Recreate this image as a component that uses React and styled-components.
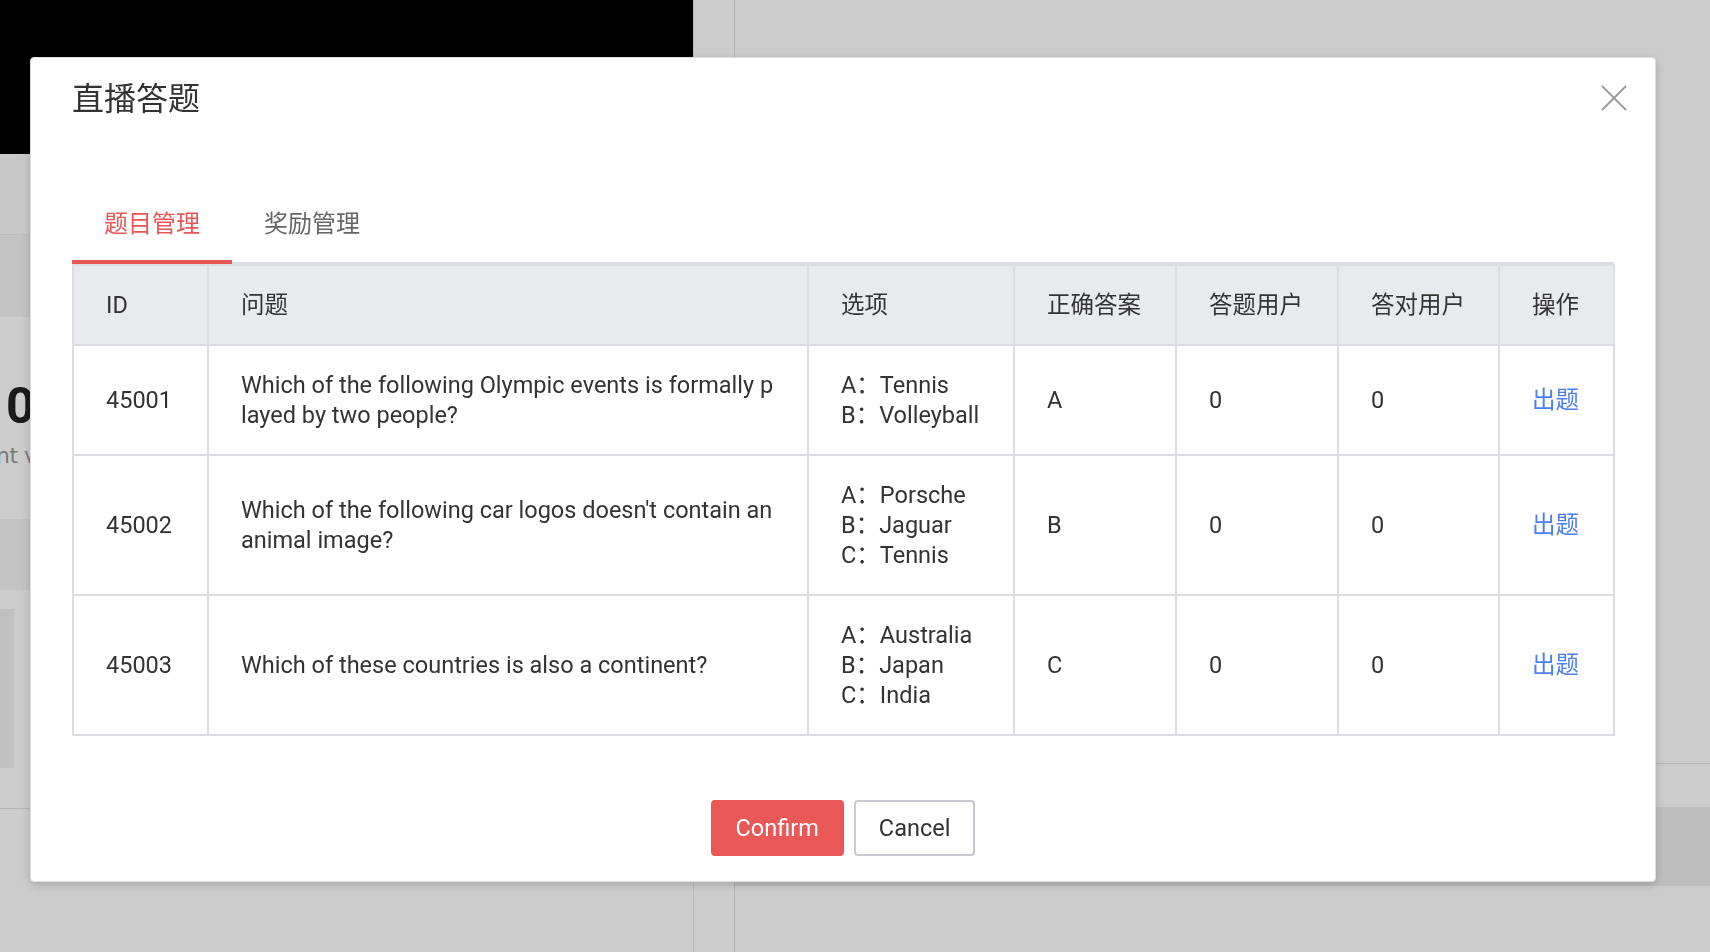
import React, { useState } from 'react';
import styled, { createGlobalStyle } from 'styled-components';

const GlobalStyle = createGlobalStyle`
    html, body {
        margin: 0;
        padding: 0;
        height: 100%;
        overflow: hidden;
    }
    body {
        font-family: Roboto, "Noto Sans CJK SC", sans-serif;
        color: #333;
    }
    * {
        box-sizing: border-box;
    }
`

// titles are kept as the lines the table shows them in
const questions = [
    { id: 45001, title: ['Which of the following Olympic events is formally p', 'layed by two people?'], options: ['Tennis', 'Volleyball'], answer: 'A', answered: 0, correct: 0 },
    { id: 45002, title: ["Which of the following car logos doesn't contain an", 'animal image?'], options: ['Porsche', 'Jaguar', 'Tennis'], answer: 'B', answered: 0, correct: 0 },
    { id: 45003, title: ['Which of these countries is also a continent?'], options: ['Australia', 'Japan', 'India'], answer: 'C', answered: 0, correct: 0 },
]

const columns = [
    { key: 'id', label: 'ID', width: 135 },
    { key: 'title', label: '问题', width: 600 },
    { key: 'options', label: '选项', width: 206 },
    { key: 'answer', label: '正确答案', width: 162 },
    { key: 'answered', label: '答题用户', width: 162 },
    { key: 'correct', label: '答对用户', width: 161 },
    { key: 'action', label: '操作', width: 115 },
]

/* ---------- page behind the dialog ---------- */

const Page = styled.div`
    display: flex;
    width: 100vw;
    height: 100vh;
    background: #fff;
`
const LeftPane = styled.div`
    width: 694px;
    display: flex;
    flex-direction: column;
    border-right: 1px solid #e8e8e8;
`
const Banner = styled.div`
    height: 154px;
    background: #000;
`
const Stripe = styled.div`
    height: ${props => props.h}px;
    background: ${props => props.bg || '#fff'};
    border-bottom: ${props => props.line ? '1px solid #ececec' : 'none'};
`
const Stat = styled.div`
    height: 202px;
    padding-top: 64px;
`
const StatValue = styled.div`
    font-size: 50px;
    font-weight: 700;
    line-height: 50px;
    color: #222;
    padding-left: 6px;
`
const StatLabel = styled.div`
    font-family: "DejaVu Sans", sans-serif;
    font-size: 22px;
    letter-spacing: -0.5px;
    color: #999;
    margin-left: -4px;
    margin-top: 12px;
`
const SmallBox = styled.div`
    height: 159px;
    width: 14px;
    background: #f1f1f1;
    margin-top: 19px;
    border-bottom: 40px solid #fff;
    box-sizing: content-box;
`
const Rule = styled.div`
    border-top: 1px solid #e2e2e2;
`
const Gutter = styled.div`
    width: 41px;
    border-right: 1px solid #e2e2e2;
`
const RightPane = styled.div`
    flex: 1;
    display: flex;
    flex-direction: column;
    padding-top: 763px;
`
const RightBand = styled.div`
    margin-top: 43px;
    height: 79px;
    background: #eeeeee;
`

/* ---------- dialog ---------- */

const Overlay = styled.div`
    position: fixed;
    inset: 0;
    background: rgba(0, 0, 0, 0.2);
    display: flex;
    align-items: flex-start;
    padding: 57px 0 0 30px;
`
const Modal = styled.div`
    position: relative;
    width: 1626px;
    background: #fff;
    border: 1px solid #dddde3;
    border-radius: 4px;
    box-shadow: 0 3px 10px rgba(0, 0, 0, 0.18);
    padding: 17px 41px 25px;
`
const Title = styled.h2`
    margin: 0;
    font-size: 32px;
    line-height: 48px;
    font-weight: 400;
    color: #333;
`
const Close = styled.button`
    position: absolute;
    top: 27px;
    right: 28px;
    width: 26px;
    height: 26px;
    padding: 0;
    border: none;
    background: none;
    cursor: pointer;
    display: flex;
`
const TabBar = styled.div`
    display: flex;
    margin-top: 67px;
    border-bottom: 2px solid #dcdde2;
`
const Tab = styled.div`
    padding: 16px 32px 18px;
    font-size: 24px;
    line-height: 36px;
    color: ${props => props.active ? '#e85656' : '#666'};
    border-bottom: 4px solid ${props => props.active ? '#e85656' : 'transparent'};
    margin-bottom: -2px;
    cursor: pointer;
`
const Table = styled.table`
    width: 1542px;
    border-collapse: collapse;
    table-layout: fixed;
    font-size: 23.5px;
    line-height: 30px;
    color: #333;
    border: 2px solid #dcdde2;
`
const Th = styled.th`
    background: #e9eaee;
    font-weight: 400;
    text-align: left;
    padding: 24px 12px 24px 32px;
    border: 2px solid #dcdde2;
`
const Td = styled.td`
    padding: 24px 12px 24px 32px;
    border: 2px solid #dcdde2;
    vertical-align: middle;
`
const Line = styled.div`
    white-space: nowrap;
`
const ActionLink = styled.a`
    color: #4c7ff0;
    text-decoration: none;
    cursor: pointer;
`
const Footer = styled.div`
    display: flex;
    justify-content: center;
    gap: 10px;
    margin-top: 64px;
`
const Button = styled.button`
    height: 56px;
    padding: 0 23px;
    font-family: Roboto, sans-serif;
    font-size: 23.5px;
    border-radius: 4px;
    cursor: pointer;
    background: ${props => props.primary ? '#e95757' : '#fff'};
    color: ${props => props.primary ? '#fff' : '#333'};
    border: 2px solid ${props => props.primary ? '#e95757' : '#c8c8d0'};
`

const CloseIcon = () => (
    <svg width="26" height="26" viewBox="0 0 26 26">
        <path d="M1 1 L25 25 M25 1 L1 25" stroke="#9a9a9a" strokeWidth="1.8" fill="none" />
    </svg>
)

const letters = ['A', 'B', 'C', 'D']

const App = () => {
    const [tab, setTab] = useState(0)

    return (
        <>
            <GlobalStyle />
            <Page>
                <LeftPane>
                    <Banner />
                    <Stripe h={81} bg="#fbfbfb" line />
                    <Stripe h={82} bg="#f4f4f4" />
                    <Stat>
                        <StatValue>0</StatValue>
                        <StatLabel>nt viewers</StatLabel>
                    </Stat>
                    <Stripe h={71} bg="#f4f4f4" />
                    <SmallBox />
                    <Rule />
                </LeftPane>
                <Gutter />
                <RightPane>
                    <Rule />
                    <RightBand />
                </RightPane>
            </Page>

            <Overlay>
                <Modal>
                    <Title>直播答题</Title>
                    <Close aria-label="close"><CloseIcon /></Close>

                    <TabBar>
                        <Tab active={tab === 0} onClick={() => setTab(0)}>题目管理</Tab>
                        <Tab active={tab === 1} onClick={() => setTab(1)}>奖励管理</Tab>
                    </TabBar>

                    <Table>
                        <colgroup>
                            {columns.map(c => <col key={c.key} style={{ width: c.width }} />)}
                        </colgroup>
                        <thead>
                            <tr>
                                {columns.map(c => <Th key={c.key}>{c.label}</Th>)}
                            </tr>
                        </thead>
                        <tbody>
                            {questions.map(q => (
                                <tr key={q.id}>
                                    <Td>{q.id}</Td>
                                    <Td>
                                        {q.title.map((t, i) => <Line key={i}>{t}</Line>)}
                                    </Td>
                                    <Td>
                                        {q.options.map((o, i) => (
                                            <Line key={i}>{letters[i]}：{o}</Line>
                                        ))}
                                    </Td>
                                    <Td>{q.answer}</Td>
                                    <Td>{q.answered}</Td>
                                    <Td>{q.correct}</Td>
                                    <Td><ActionLink>出题</ActionLink></Td>
                                </tr>
                            ))}
                        </tbody>
                    </Table>

                    <Footer>
                        <Button primary>Confirm</Button>
                        <Button>Cancel</Button>
                    </Footer>
                </Modal>
            </Overlay>
        </>
    )
}

export default App
